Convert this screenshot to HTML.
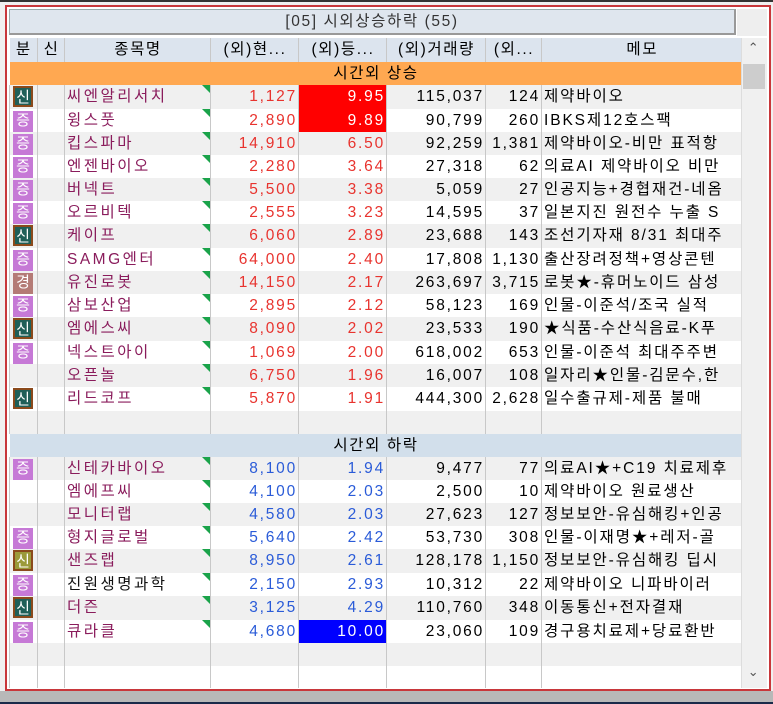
<!DOCTYPE html>
<html><head><meta charset="utf-8"><style>
*{margin:0;padding:0;box-sizing:border-box}
body{width:773px;height:704px;background:#f0f0f0;position:relative;overflow:hidden;font-family:"Liberation Sans","Noto Sans CJK KR",sans-serif;font-size:15.5px;color:#000;letter-spacing:1.6px}
#top{position:absolute;left:0;top:0;width:773px;height:2px;background:#333}
#rb{position:absolute;left:5px;top:5px;width:766px;height:686px;border:2px solid #c8373b;background:#fff}
#bot{position:absolute;left:0;top:691px;width:773px;height:13px;background:#b8b8b8;border-bottom:2px solid #1a2a4a}
#title{position:absolute;left:9px;top:9px;width:727px;height:26px;background:#dfe6ee;border:1px solid #9aa;border-right:2px solid #999;border-bottom:2px solid #999;text-align:center;line-height:23px;color:#333}
#tr{position:absolute;left:737px;top:9px;width:30px;height:27px;background:#eee}
#grid{position:absolute;left:9px;top:38px;width:732px;height:650px;overflow:hidden}
table{border-collapse:collapse;table-layout:fixed;width:732px}
td{height:23px;padding:0 1px 0 2px;white-space:nowrap;overflow:hidden;border-left:1px solid #c8c8c8;position:relative;line-height:22px}
tr.h td{background:#dce4ee;text-align:center;height:24px}
tr.o td{background:#ffa851;border-left:none;text-align:center}
tr.b td{background:#d2dfeb;border-left:none;text-align:center}
.g td{background:#f0f0f0}
.w td{background:#fff}
.r{text-align:right;letter-spacing:1.8px}
.up{color:#e8332e}
.dn{color:#2a5bd8}
.nm{color:#8a1c5c;padding-left:2px;letter-spacing:2.5px}
.nm.k{color:#111}
.nm:after{content:"";position:absolute;right:0;top:0;border-top:8px solid #1aa34a;border-left:8px solid transparent}
.bg{display:inline-block;width:20px;height:21px;line-height:19px;text-align:center;color:#fff;font-size:15px;margin-top:1px;margin-left:-1px;letter-spacing:0}
.s{background:#1f5f58;border:2px solid #8b4a1c}
.j{background:#c679d6}
.k2{background:#b47b76}
.o2{background:#9b9a3a;border:2px solid #8b4a1c}
.rd{background:#ff0000!important;color:#fff}
.bl{background:#0000ff!important;color:#fff}
td.c{text-align:center;padding:0}
td.m{letter-spacing:1.9px}
#sb{position:absolute;left:741px;top:38px;width:26px;height:650px;background:#f0f0f0;border-left:1px solid #ddd}
#th{position:absolute;left:743px;top:64px;width:22px;height:25px;background:#cdcdcd}
</style></head><body>
<div id="top"></div>
<div id="rb"></div>
<div id="bot"></div>
<div id="title">[05] 시외상승하락 (55)</div>
<div id="tr"></div>
<div id="grid"><table>
<colgroup><col style="width:28px"><col style="width:27px"><col style="width:146px"><col style="width:88px"><col style="width:88px"><col style="width:99px"><col style="width:56px"><col style="width:200px"></colgroup>
<tr class="h"><td style="border-left:none">분</td><td>신</td><td>종목명</td><td>(외)현...</td><td>(외)등...</td><td>(외)거래량</td><td>(외...</td><td>메모</td></tr>
<tr class="o"><td colspan="8" style="text-align:center">시간외 상승</td></tr>
<tr class="g"><td class="c"><span class="bg s">신</span></td><td></td><td class="nm">씨엔알리서치</td><td class="r up">1,127</td><td class="r rd">9.95</td><td class="r">115,037</td><td class="r">124</td><td class="m">제약바이오</td></tr>
<tr class="w"><td class="c"><span class="bg j">증</span></td><td></td><td class="nm">윙스풋</td><td class="r up">2,890</td><td class="r rd">9.89</td><td class="r">90,799</td><td class="r">260</td><td class="m">IBKS제12호스팩</td></tr>
<tr class="g"><td class="c"><span class="bg j">증</span></td><td></td><td class="nm">킵스파마</td><td class="r up">14,910</td><td class="r up">6.50</td><td class="r">92,259</td><td class="r">1,381</td><td class="m">제약바이오-비만 표적항</td></tr>
<tr class="w"><td class="c"><span class="bg j">증</span></td><td></td><td class="nm">엔젠바이오</td><td class="r up">2,280</td><td class="r up">3.64</td><td class="r">27,318</td><td class="r">62</td><td class="m">의료AI 제약바이오 비만</td></tr>
<tr class="g"><td class="c"><span class="bg j">증</span></td><td></td><td class="nm">버넥트</td><td class="r up">5,500</td><td class="r up">3.38</td><td class="r">5,059</td><td class="r">27</td><td class="m">인공지능+경협재건-네옴</td></tr>
<tr class="w"><td class="c"><span class="bg j">증</span></td><td></td><td class="nm">오르비텍</td><td class="r up">2,555</td><td class="r up">3.23</td><td class="r">14,595</td><td class="r">37</td><td class="m">일본지진 원전수 누출 S</td></tr>
<tr class="g"><td class="c"><span class="bg s">신</span></td><td></td><td class="nm">케이프</td><td class="r up">6,060</td><td class="r up">2.89</td><td class="r">23,688</td><td class="r">143</td><td class="m">조선기자재 8/31 최대주</td></tr>
<tr class="w"><td class="c"><span class="bg j">증</span></td><td></td><td class="nm">SAMG엔터</td><td class="r up">64,000</td><td class="r up">2.40</td><td class="r">17,808</td><td class="r">1,130</td><td class="m">출산장려정책+영상콘텐</td></tr>
<tr class="g"><td class="c"><span class="bg k2">경</span></td><td></td><td class="nm">유진로봇</td><td class="r up">14,150</td><td class="r up">2.17</td><td class="r">263,697</td><td class="r">3,715</td><td class="m">로봇★-휴머노이드 삼성</td></tr>
<tr class="w"><td class="c"><span class="bg j">증</span></td><td></td><td class="nm">삼보산업</td><td class="r up">2,895</td><td class="r up">2.12</td><td class="r">58,123</td><td class="r">169</td><td class="m">인물-이준석/조국 실적</td></tr>
<tr class="g"><td class="c"><span class="bg s">신</span></td><td></td><td class="nm">엠에스씨</td><td class="r up">8,090</td><td class="r up">2.02</td><td class="r">23,533</td><td class="r">190</td><td class="m">★식품-수산식음료-K푸</td></tr>
<tr class="w"><td class="c"><span class="bg j">증</span></td><td></td><td class="nm">넥스트아이</td><td class="r up">1,069</td><td class="r up">2.00</td><td class="r">618,002</td><td class="r">653</td><td class="m">인물-이준석 최대주주변</td></tr>
<tr class="g"><td class="c"></td><td></td><td class="nm">오픈놀</td><td class="r up">6,750</td><td class="r up">1.96</td><td class="r">16,007</td><td class="r">108</td><td class="m">일자리★인물-김문수,한</td></tr>
<tr class="w"><td class="c"><span class="bg s">신</span></td><td></td><td class="nm">리드코프</td><td class="r up">5,870</td><td class="r up">1.91</td><td class="r">444,300</td><td class="r">2,628</td><td class="m">일수출규제-제품 불매</td></tr>
<tr class="g"><td></td><td></td><td></td><td></td><td></td><td></td><td></td><td></td></tr>
<tr class="b"><td colspan="8">시간외 하락</td></tr>
<tr class="g"><td class="c"><span class="bg j">증</span></td><td></td><td class="nm">신테카바이오</td><td class="r dn">8,100</td><td class="r dn">1.94</td><td class="r">9,477</td><td class="r">77</td><td class="m">의료AI★+C19 치료제후</td></tr>
<tr class="w"><td class="c"></td><td></td><td class="nm">엠에프씨</td><td class="r dn">4,100</td><td class="r dn">2.03</td><td class="r">2,500</td><td class="r">10</td><td class="m">제약바이오 원료생산</td></tr>
<tr class="g"><td class="c"></td><td></td><td class="nm">모니터랩</td><td class="r dn">4,580</td><td class="r dn">2.03</td><td class="r">27,623</td><td class="r">127</td><td class="m">정보보안-유심해킹+인공</td></tr>
<tr class="w"><td class="c"><span class="bg j">증</span></td><td></td><td class="nm">형지글로벌</td><td class="r dn">5,640</td><td class="r dn">2.42</td><td class="r">53,730</td><td class="r">308</td><td class="m">인물-이재명★+레저-골</td></tr>
<tr class="g"><td class="c"><span class="bg o2">신</span></td><td></td><td class="nm">샌즈랩</td><td class="r dn">8,950</td><td class="r dn">2.61</td><td class="r">128,178</td><td class="r">1,150</td><td class="m">정보보안-유심해킹 딥시</td></tr>
<tr class="w"><td class="c"><span class="bg j">증</span></td><td></td><td class="nm k">진원생명과학</td><td class="r dn">2,150</td><td class="r dn">2.93</td><td class="r">10,312</td><td class="r">22</td><td class="m">제약바이오 니파바이러</td></tr>
<tr class="g"><td class="c"><span class="bg s">신</span></td><td></td><td class="nm">더즌</td><td class="r dn">3,125</td><td class="r dn">4.29</td><td class="r">110,760</td><td class="r">348</td><td class="m">이동통신+전자결재</td></tr>
<tr class="w"><td class="c"><span class="bg j">증</span></td><td></td><td class="nm">큐라클</td><td class="r dn">4,680</td><td class="r bl">10.00</td><td class="r">23,060</td><td class="r">109</td><td class="m">경구용치료제+당료환반</td></tr>
<tr class="g"><td></td><td></td><td></td><td></td><td></td><td></td><td></td><td></td></tr>
<tr class="w"><td></td><td></td><td></td><td></td><td></td><td></td><td></td><td></td></tr>
</table></div>
<div id="sb"></div><div id="th"></div>
<div style="position:absolute;left:745px;top:40px;width:18px;text-align:center;color:#555;font-size:13px">&#8963;</div>
<div style="position:absolute;left:745px;top:664px;width:18px;text-align:center;color:#555;font-size:13px">&#8964;</div>
</body></html>
